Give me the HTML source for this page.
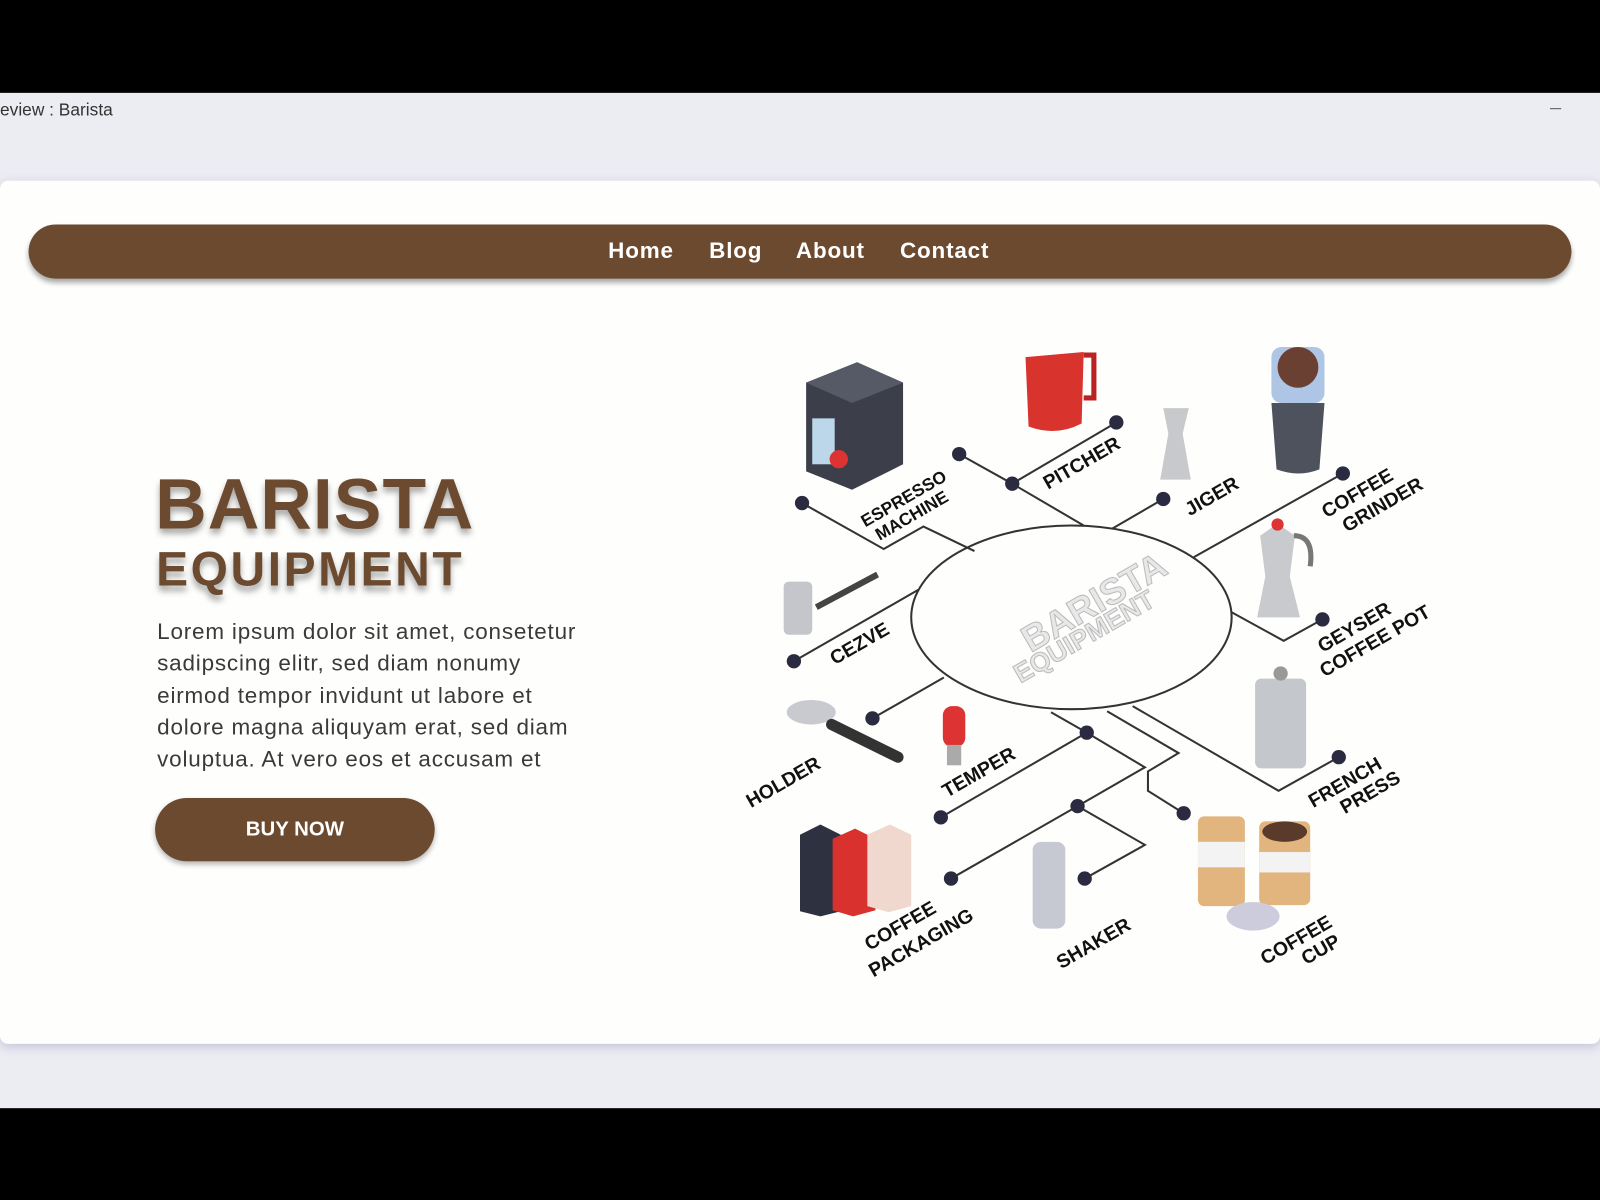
<!DOCTYPE html>
<html><head><meta charset="utf-8"><style>
html,body{margin:0;padding:0;width:1600px;height:1200px;overflow:hidden;background:#000;}
#w{position:absolute;left:0;top:0;width:1568px;height:1176px;transform:scale(1.020408);transform-origin:0 0;font-family:"Liberation Sans",sans-serif;}
.tb{position:absolute;left:0;top:91px;width:1568px;height:995px;background:#ececf3;}
.tt{position:absolute;left:0;top:98px;font-size:17px;color:#333;}
.card{position:absolute;left:0;top:177px;width:1568px;height:846px;background:#fefefd;border-radius:8px;box-shadow:0 3px 10px rgba(120,120,170,.35);}
.nav{position:absolute;left:28px;top:220px;width:1512px;height:53px;background:#6b4a30;border-radius:27px;box-shadow:0 4px 5px rgba(0,0,0,.35);}
.nav span{position:absolute;top:13px;color:#fff;font-weight:bold;font-size:22px;letter-spacing:.8px;}
h1{position:absolute;left:152px;top:456px;margin:0;font-size:70px;line-height:76px;color:#6b4a30;font-weight:900;text-shadow:0 5px 6px rgba(0,0,0,.35);letter-spacing:1px;}
h2{position:absolute;left:153px;top:532px;margin:0;font-size:47px;line-height:52px;color:#6b4a30;font-weight:900;text-shadow:0 5px 6px rgba(0,0,0,.35);letter-spacing:2.5px;}
p{position:absolute;left:154px;top:603px;margin:0;width:460px;white-space:nowrap;font-size:22px;line-height:31.3px;color:#3a3a3a;letter-spacing:.8px;}
.btn{position:absolute;left:152px;top:782px;width:274px;height:62px;background:#6b4a30;border-radius:31px;color:#fff;font-weight:bold;font-size:20px;text-align:center;line-height:62px;box-shadow:0 3px 5px rgba(0,0,0,.3);}
svg text{font-family:"Liberation Sans",sans-serif;font-weight:bold;font-size:19px;fill:#111;}
</style></head><body><div id="w">
<div class="tb"></div>
<div class="tt">eview : Barista</div>
<div style="position:absolute;left:1519px;top:106px;width:11px;height:1px;background:#555"></div>
<div class="card"></div>
<div class="nav"><span style="left:568px">Home</span><span style="left:667px">Blog</span><span style="left:752px">About</span><span style="left:854px">Contact</span></div>
<h1>BARISTA</h1>
<h2>EQUIPMENT</h2>
<p>Lorem ipsum dolor sit amet, consetetur<br>sadipscing elitr, sed diam nonumy<br>eirmod tempor invidunt ut labore et<br>dolore magna aliquyam erat, sed diam<br>voluptua. At vero eos et accusam et</p>
<div class="btn">BUY NOW</div>
<svg style="position:absolute;left:0;top:0" width="1568" height="1176">
<g stroke="#333" stroke-width="2" fill="none">
<ellipse cx="1050" cy="605" rx="157" ry="90"/>
<polyline points="786,493 866,538 905,516 955,540"/>
<polyline points="940,445 992,474 1062,515"/>
<polyline points="1094,414 992,474"/>
<polyline points="1140,489 1090,518"/>
<polyline points="1316,464 1170,546"/>
<polyline points="1207,600 1258,628 1296,607"/>
<polyline points="1110,692 1253,775 1312,742"/>
<polyline points="1085,697 1155,738 1125,756 1125,775 1160,797"/>
<polyline points="778,648 900,578"/>
<polyline points="855,704 925,664"/>
<polyline points="1030,698 1065,718 1122,752 1056,790 932,861"/>
<polyline points="1065,718 922,801"/>
<polyline points="1056,790 1122,828 1063,861"/>
</g>
<g fill="#2a2a40">
<circle cx="786" cy="493" r="7"/><circle cx="940" cy="445" r="7"/><circle cx="992" cy="474" r="7"/><circle cx="1094" cy="414" r="7"/><circle cx="1140" cy="489" r="7"/><circle cx="1316" cy="464" r="7"/><circle cx="1296" cy="607" r="7"/><circle cx="1312" cy="742" r="7"/><circle cx="1160" cy="797" r="7"/><circle cx="778" cy="648" r="7"/><circle cx="855" cy="704" r="7"/><circle cx="1065" cy="718" r="7"/><circle cx="922" cy="801" r="7"/><circle cx="1056" cy="790" r="7"/><circle cx="932" cy="861" r="7"/><circle cx="1063" cy="861" r="7"/>
</g>
<polygon points="790,375 840,355 885,375 885,455 835,480 790,462" fill="#3c3f4a"/>
<polygon points="790,375 840,355 885,375 835,395" fill="#555a66"/>
<rect x="796" y="410" width="22" height="45" fill="#bcd7ea"/><circle cx="822" cy="450" r="9" fill="#d33"/>
<path d="M1005,350 L1062,345 L1060,415 Q1035,428 1008,418 Z" fill="#d8332c"/><path d="M1062,348 h10 v42 h-10" stroke="#b22" stroke-width="5" fill="none"/>
<path d="M1140,400 h25 l-6,25 l8,45 h-30 l8,-45 Z" fill="#c8c9cc"/>
<rect x="1246" y="340" width="52" height="55" rx="10" fill="#9bb7de" opacity=".8"/><circle cx="1272" cy="360" r="20" fill="#6a4033"/>
<path d="M1246,395 h52 l-5,65 q-20,8 -42,0 Z" fill="#4d525c"/>
<path d="M1235,525 l17,-12 l17,12 l-5,40 l10,40 h-42 l8,-40 Z" fill="#c9cacd"/><circle cx="1252" cy="514" r="6" fill="#d33"/><path d="M1268,525 q20,0 16,30" stroke="#777" stroke-width="5" fill="none"/>
<rect x="1230" y="665" width="50" height="88" rx="6" fill="#c4c7cc"/><circle cx="1255" cy="660" r="7" fill="#999"/>
<rect x="1174" y="800" width="46" height="88" rx="6" fill="#e2b57e"/><rect x="1174" y="825" width="46" height="25" fill="#f3f3f3"/>
<rect x="1234" y="805" width="50" height="82" rx="6" fill="#e2b57e"/><ellipse cx="1259" cy="815" rx="22" ry="10" fill="#5a3a2a"/><rect x="1234" y="835" width="50" height="20" fill="#f3f3f3"/>
<ellipse cx="1228" cy="898" rx="26" ry="14" fill="#ccd" />
<rect x="1012" y="825" width="32" height="85" rx="8" fill="#c6c8d2"/>
<path d="M784,818 l20,-10 l20,10 v75 l-20,5 l-20,-5 Z" fill="#2e3140"/><path d="M816,822 l22,-10 l20,10 v70 l-22,6 l-20,-6 Z" fill="#d9322e"/><path d="M850,818 l22,-10 l21,10 v70 l-22,6 l-21,-6 Z" fill="#f1d8cf"/>
<ellipse cx="795" cy="698" rx="24" ry="12" fill="#c8cacf"/><path d="M815,710 L880,742" stroke="#333" stroke-width="11" stroke-linecap="round"/>
<rect x="924" y="692" width="22" height="40" rx="9" fill="#d33"/><rect x="928" y="730" width="14" height="20" fill="#aaa"/>
<rect x="768" y="570" width="28" height="52" rx="5" fill="#c4c6cb"/><path d="M800,595 L860,563" stroke="#444" stroke-width="6"/>
<text transform="translate(1010,640) rotate(-30)" style="font-size:36px;font-weight:900;fill:#e8e8e8;stroke:#bbb;stroke-width:1">BARISTA</text>
<text transform="translate(1000,670) rotate(-30)" style="font-size:26px;font-weight:900;fill:#e8e8e8;stroke:#bbb;stroke-width:1">EQUIPMENT</text>
<text transform="translate(848,517) rotate(-30)" style="font-size:17px">ESPRESSO</text>
<text transform="translate(862,530) rotate(-30)" style="font-size:17px">MACHINE</text>
<text transform="translate(1027,480) rotate(-30)">PITCHER</text>
<text transform="translate(1166,506) rotate(-30)">JIGER</text>
<text transform="translate(1300,508) rotate(-30)">COFFEE</text>
<text transform="translate(1320,522) rotate(-30)">GRINDER</text>
<text transform="translate(1296,640) rotate(-30)">GEYSER</text>
<text transform="translate(1298,664) rotate(-30)">COFFEE POT</text>
<text transform="translate(1287,792) rotate(-30)">FRENCH</text>
<text transform="translate(1318,798) rotate(-30)">PRESS</text>
<text transform="translate(1240,946) rotate(-30)">COFFEE</text>
<text transform="translate(1280,946) rotate(-30)">CUP</text>
<text transform="translate(1040,950) rotate(-30)">SHAKER</text>
<text transform="translate(852,932) rotate(-30)">COFFEE</text>
<text transform="translate(856,958) rotate(-30)">PACKAGING</text>
<text transform="translate(928,782) rotate(-30)">TEMPER</text>
<text transform="translate(736,792) rotate(-30)">HOLDER</text>
<text transform="translate(818,652) rotate(-30)">CEZVE</text>
</svg>
</div></body></html>
